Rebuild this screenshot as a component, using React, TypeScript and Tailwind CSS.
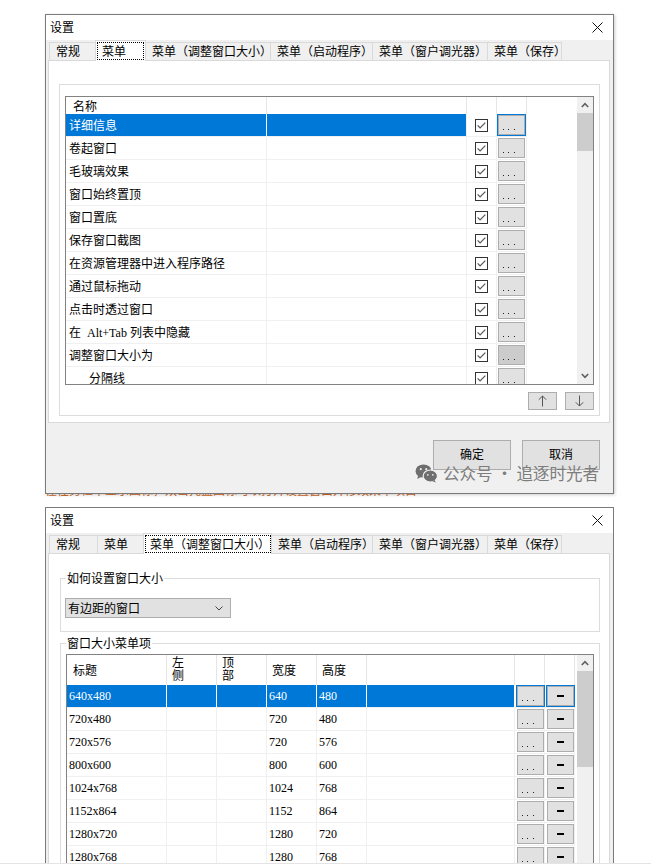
const TAB_LABELS = ['常规', '菜单', '菜单（调整窗口大小）', '菜单（启动程序）', '菜单（窗户调光器）', '菜单（保存）'];
const TABS_1 = ['w-[46px]', 'w-[51px]', 'w-[124px]', 'w-[102px]', 'w-[115px]', 'w-[75px]'];
const TABS_2 = ['w-[48px]', 'w-[46px]', 'w-[129px]', 'w-[100px]', 'w-[115px]', 'w-[75px]'];

const MENU_ITEMS = [
  '详细信息',
  '卷起窗口',
  '毛玻璃效果',
  '窗口始终置顶',
  '窗口置底',
  '保存窗口截图',
  '在资源管理器中进入程序路径',
  '通过鼠标拖动',
  '点击时透过窗口',
  '在\u00a0 Alt+Tab 列表中隐藏',
  '调整窗口大小为',
  '分隔线',
];

const SIZES = [
  ['640x480', '640', '480'],
  ['720x480', '720', '480'],
  ['720x576', '720', '576'],
  ['800x600', '800', '600'],
  ['1024x768', '1024', '768'],
  ['1152x864', '1152', '864'],
  ['1280x720', '1280', '720'],
  ['1280x768', '1280', '768'],
  ['1280x800', '1280', '800'],
];

function TitleBar() {
  return (
    <div className="flex h-[25px] shrink-0 items-center justify-between bg-white pl-[4px] pr-[10px]">
      <span>设置</span>
      <svg width="11" height="11" viewBox="0 0 11 11">
        <path d="M0.5 0.5 L10.5 10.5 M10.5 0.5 L0.5 10.5" stroke="#111" strokeWidth="1" fill="none" />
      </svg>
    </div>
  );
}

function Tabs({ active, widths }: { active: number; widths: string[] }) {
  return (
    <div className="relative z-10 ml-[3px] flex h-[20px] shrink-0 items-end">
      {TAB_LABELS.map((label, i) =>
        i === active ? (
          <div
            key={label}
            className={`${widths[i]} -mb-px flex h-[21px] shrink-0 items-start border-x border-t border-[#d9d9d9] bg-white pt-[1px]`}
          >
            <span className="mx-[1px] flex h-[18px] w-full items-center border border-dotted border-black pl-[4px] pt-px whitespace-nowrap">
              {label}
            </span>
          </div>
        ) : (
          <div
            key={label}
            className={`${widths[i]} flex h-[18px] shrink-0 items-center border-t border-l border-[#d9d9d9] bg-[#f0f0f0] pl-[6px] pt-px whitespace-nowrap ${
              i === TAB_LABELS.length - 1 ? 'border-r' : ''
            } ${i === active + 1 ? 'border-l-0' : ''}`}
          >
            {label}
          </div>
        ),
      )}
    </div>
  );
}

function Check() {
  return (
    <svg width="13" height="13" viewBox="0 0 13 13">
      <rect x="0.5" y="0.5" width="12" height="12" fill="white" stroke="#333" />
      <path d="M2.6 6.4 L5.1 8.9 L10.3 3.6" fill="none" stroke="#5a5a5a" strokeWidth="1.3" />
    </svg>
  );
}

function Dots() {
  return (
    <svg width="25" height="18" viewBox="0 0 25 18">
      <rect x="4" y="13" width="1" height="1" fill="#222" />
      <rect x="9" y="13" width="1" height="1" fill="#222" />
      <rect x="15" y="13" width="1" height="1" fill="#222" />
    </svg>
  );
}

function SmallBtn({ selected, hover, children }: { selected?: boolean; hover?: boolean; children: React.ReactNode }) {
  return (
    <div
      className={`flex h-[20px] w-[27px] items-center justify-center border border-[#adadad] ${
        hover ? 'bg-[#cccccc]' : 'bg-[#e1e1e1]'
      } ${selected ? 'shadow-[0_0_0_1px_#0078d7]' : ''}`}
    >
      {children}
    </div>
  );
}

function Chevron({ up }: { up?: boolean }) {
  return (
    <svg width="8" height="6" viewBox="0 0 8 6">
      <path d={up ? 'M0.8 5 L4 1.6 L7.2 5' : 'M0.8 1 L4 4.4 L7.2 1'} fill="none" stroke="#606060" strokeWidth="1.6" />
    </svg>
  );
}

function ScrollBar({ thumb }: { thumb: string }) {
  return (
    <div className="flex w-[16px] shrink-0 flex-col bg-[#f0f0f0]">
      <div className="flex h-[16px] shrink-0 items-center justify-center">
        <Chevron up />
      </div>
      <div className={`${thumb} shrink-0 bg-[#cdcdcd]`} />
      <div className="flex-1" />
      <div className="flex h-[16px] shrink-0 items-center justify-center">
        <Chevron />
      </div>
    </div>
  );
}

function MenuList() {
  return (
    <div className="flex h-[289px] w-[529px] border border-[#828282] bg-white">
      <div className="flex min-w-0 flex-1 flex-col overflow-hidden">
        <div className="flex h-[17px] shrink-0">
          <div className="flex w-[201px] items-center border-r border-[#e5e5e5] pl-[7px] pt-[2px]">名称</div>
          <div className="w-[200px] border-r border-[#e5e5e5]" />
          <div className="w-[30px] border-r border-[#e5e5e5]" />
          <div className="w-[30px] border-r border-[#e5e5e5]" />
        </div>
        {MENU_ITEMS.map((item, i) => {
          const sel = i === 0;
          return (
            <div key={item} className="flex h-[23px] shrink-0">
              <div
                className={`flex w-[201px] items-center border-b border-r pt-[2px] whitespace-nowrap ${
                  sel ? 'border-b-[#f0f0f0] border-r-white bg-[#0078d7] text-white' : 'border-[#f0f0f0]'
                } ${i === MENU_ITEMS.length - 1 ? 'pl-[23px]' : 'pl-[3px]'}`}
              >
                {item}
              </div>
              <div className={`w-[200px] border-b border-r border-[#f0f0f0] ${sel ? 'bg-[#0078d7]' : ''}`} />
              <div className="flex w-[30px] items-center justify-center border-b border-r border-[#f0f0f0]">
                <Check />
              </div>
              <div className="flex w-[30px] items-center border-b border-r border-[#f0f0f0] pl-[1px]">
                <SmallBtn selected={sel} hover={i === 10}>
                  <Dots />
                </SmallBtn>
              </div>
            </div>
          );
        })}
      </div>
      <ScrollBar thumb="h-[38px]" />
    </div>
  );
}

function ArrowBtn({ up }: { up?: boolean }) {
  return (
    <div className="flex h-[18px] w-[29px] items-center justify-center border border-[#adadad] bg-[#e1e1e1]">
      <svg width="9" height="12" viewBox="0 0 9 12">
        {up ? (
          <path d="M4.5 1 V11.5 M0.8 4.7 L4.5 1 L8.2 4.7" fill="none" stroke="#555" strokeWidth="1" />
        ) : (
          <path d="M4.5 0.5 V11 M0.8 7.3 L4.5 11 L8.2 7.3" fill="none" stroke="#555" strokeWidth="1" />
        )}
      </svg>
    </div>
  );
}

function DlgButton({ children }: { children: React.ReactNode }) {
  return (
    <div className="flex h-[30px] w-[78px] items-center justify-center border border-[#adadad] bg-[#e1e1e1]">
      {children}
    </div>
  );
}

function Watermark() {
  return (
    <div className="absolute right-[14px] bottom-[10px] flex items-center gap-[5px] text-[#7d7d7d]">
      <svg width="23" height="19" viewBox="0 0 23 19">
        <ellipse cx="8.5" cy="7" rx="8" ry="6.6" fill="#6e6e6e" />
        <path d="M3.2 11.5 L2.2 15 L6.4 12.8 Z" fill="#6e6e6e" />
        <ellipse cx="15.3" cy="12" rx="7.2" ry="6" fill="#6e6e6e" stroke="#f0f0f0" strokeWidth="1.2" />
        <path d="M19.5 16 L20.8 18.6 L17 17 Z" fill="#6e6e6e" />
        <circle cx="5.8" cy="5.2" r="1.1" fill="#e8e8e8" />
        <circle cx="11.2" cy="5.2" r="1.1" fill="#e8e8e8" />
        <circle cx="12.8" cy="10.8" r="0.9" fill="#e8e8e8" />
        <circle cx="17.8" cy="10.8" r="0.9" fill="#e8e8e8" />
      </svg>
      <span className="font-['Noto_Sans_CJK_SC',sans-serif] text-[16.5px] leading-[20px] whitespace-nowrap">
        公众号 · 追逐时光者
      </span>
    </div>
  );
}

function SettingsMenu() {
  return (
    <div className="relative flex h-[480px] w-[569px] flex-col border border-[#7a7a7a] bg-[#f0f0f0] shadow-[1px_1px_3px_rgba(0,0,0,0.2)]">
      <TitleBar />
      <Tabs active={1} widths={TABS_1} />
      <div className="ml-[2px] mr-[3px] h-[363px] shrink-0 border border-[#d9d9d9] bg-white pl-[10px] pt-[23px]">
        <div className="h-[332px] w-[541px] border border-[#dcdcdc] pl-[5px] pt-[11px]">
          <MenuList />
          <div className="mt-[7px] mr-[5px] flex justify-end gap-[8px]">
            <ArrowBtn up />
            <ArrowBtn />
          </div>
        </div>
      </div>
      <div className="mt-[17px] flex justify-end gap-[11px] pr-[13px]">
        <DlgButton>确定</DlgButton>
        <DlgButton>取消</DlgButton>
      </div>
      <Watermark />
    </div>
  );
}

function SizeList() {
  return (
    <div className="ml-[5px] mt-[2px] flex h-[300px] w-[528px] border border-[#828282] bg-white">
      <div className="flex min-w-0 flex-1 flex-col overflow-hidden">
        <div className="flex h-[30px] shrink-0">
          <div className="flex w-[100px] items-center border-r border-[#e5e5e5] pl-[6px] pt-[2px]">标题</div>
          <div className="w-[50px] border-r border-[#e5e5e5] pl-[5px] pt-[2px]">
            <div className="w-[12px] leading-[13px]">左侧</div>
          </div>
          <div className="w-[50px] border-r border-[#e5e5e5] pl-[5px] pt-[2px]">
            <div className="w-[12px] leading-[13px]">顶部</div>
          </div>
          <div className="flex w-[50px] items-center border-r border-[#e5e5e5] pl-[5px] pt-[2px]">宽度</div>
          <div className="flex w-[50px] items-center border-r border-[#e5e5e5] pl-[5px] pt-[2px]">高度</div>
          <div className="w-[148px] border-r border-[#e5e5e5]" />
          <div className="w-[30px] border-r border-[#e5e5e5]" />
          <div className="w-[30px] border-r border-[#e5e5e5]" />
        </div>
        {SIZES.map(([title, w, h], i) => {
          const sel = i === 0;
          const cell = sel
            ? 'border-b border-r border-b-[#f0f0f0] border-r-white bg-[#0078d7] text-white'
            : 'border-b border-r border-[#f0f0f0]';
          return (
            <div key={title} className="flex h-[23px] shrink-0">
              <div className={`flex w-[100px] items-center pl-[2px] ${cell}`}>{title}</div>
              <div className={`w-[50px] ${cell}`} />
              <div className={`w-[50px] ${cell}`} />
              <div className={`flex w-[50px] items-center pl-[2px] ${cell}`}>{w}</div>
              <div className={`flex w-[50px] items-center pl-[2px] ${cell}`}>{h}</div>
              <div className={`w-[148px] ${cell}`} />
              <div className="flex w-[30px] items-center border-b border-r border-[#f0f0f0] pl-[2px]">
                <SmallBtn selected={sel}>
                  <Dots />
                </SmallBtn>
              </div>
              <div className="flex w-[30px] items-center border-b border-r border-[#f0f0f0] pl-[2px]">
                <SmallBtn selected={sel}>
                  <div className="h-[1.5px] w-[7px] bg-black" />
                </SmallBtn>
              </div>
            </div>
          );
        })}
      </div>
      <ScrollBar thumb="h-[96px]" />
    </div>
  );
}

function SettingsResize() {
  return (
    <div className="flex h-[420px] w-[569px] flex-col border border-[#7a7a7a] bg-[#f0f0f0]">
      <TitleBar />
      <Tabs active={2} widths={TABS_2} />
      <div className="ml-[2px] mr-[3px] min-h-0 flex-1 overflow-hidden border border-[#d9d9d9] bg-white pl-[11px] pt-[16px]">
        <fieldset className="h-[62px] w-[540px] border border-[#dcdcdc]">
          <legend className="ml-[5px] px-[1px] pt-px leading-[16px]">如何设置窗口大小</legend>
          <div className="ml-[4px] mt-[11px] flex h-[20px] w-[166px] items-center justify-between border border-[#adadad] bg-[#e1e1e1] pl-[2px] pr-[7px] pt-px">
            <span>有边距的窗口</span>
            <svg width="8" height="5" viewBox="0 0 8 5">
              <path d="M0.5 0.5 L4 4 L7.5 0.5" fill="none" stroke="#444" strokeWidth="1" />
            </svg>
          </div>
        </fieldset>
        <fieldset className="mt-[3px] h-[320px] w-[540px] border border-[#dcdcdc]">
          <legend className="ml-[5px] px-[1px] pt-px leading-[16px]">窗口大小菜单项</legend>
          <SizeList />
        </fieldset>
      </div>
    </div>
  );
}

export default function App() {
  return (
    <div className="flex h-[865px] w-[651px] flex-col overflow-hidden bg-white font-['Liberation_Serif','Noto_Sans_CJK_SC',serif] text-[12px] leading-none text-black">
      <div className="ml-[45px] mt-[14px] shrink-0">
        <SettingsMenu />
      </div>
      <div className="ml-[45px] h-[13px] shrink-0">
        <div className="h-[3px] w-[372px] overflow-hidden">
          <div className="-mt-[9px] whitespace-nowrap text-[12px] leading-[12px] text-[#d2691e]">
            在任务栏中显示图标，双击托盘图标可以打开设置窗口并修改菜单项目
          </div>
        </div>
      </div>
      <div className="ml-[45px] min-h-0 flex-1 overflow-hidden">
        <SettingsResize />
      </div>
      <div className="h-px shrink-0 bg-[#e4e4e4]" />
      <div className="h-px shrink-0" />
    </div>
  );
}
